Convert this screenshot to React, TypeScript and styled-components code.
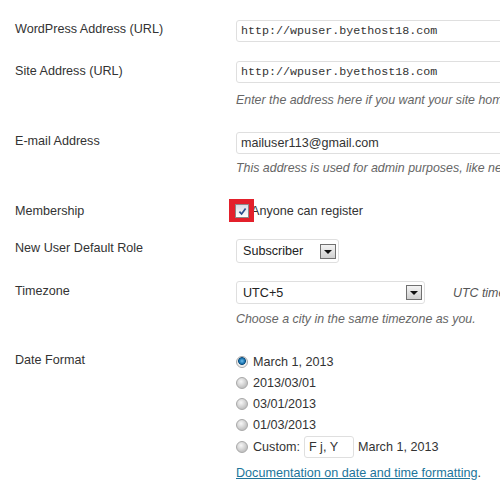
import styled, { createGlobalStyle } from "styled-components";

const GlobalStyle = createGlobalStyle`
  html, body {
    margin: 0;
    padding: 0;
    background: #fff;
    overflow: hidden;
  }
  body {
    font-family: "Liberation Sans", Arial, sans-serif;
    font-size: 12.6px;
    color: #333;
  }
`;

const dateFormats = ["March 1, 2013", "2013/03/01", "03/01/2013", "01/03/2013"];

const App = () => {
  return (
    <>
      <GlobalStyle />
      <Page>
        <Row $gap={0}>
          <Label $pad={1}>WordPress Address (URL)</Label>
          <Field>
            <TextInput $mono>http://wpuser.byethost18.com</TextInput>
          </Field>
        </Row>

        <Row $gap={19}>
          <Label $pad={2}>Site Address (URL)</Label>
          <Field>
            <TextInput $mono>http://wpuser.byethost18.com</TextInput>
            <Description $top={9}>
              Enter the address here if you want your site home page to be different from the directory you installed WordPress.
            </Description>
          </Field>
        </Row>

        <Row $gap={24}>
          <Label $pad={1}>E-mail Address</Label>
          <Field>
            <TextInput>mailuser113@gmail.com</TextInput>
            <Description $top={6}>
              This address is used for admin purposes, like new user notification.
            </Description>
          </Field>
        </Row>

        <Row $gap={27}>
          <Label $pad={0}>Membership</Label>
          <CheckLine>
            <CheckWrap>
              <Highlight />
              <CheckBox>
                <svg width="9" height="9" viewBox="0 0 9 9">
                  <path d="M1.4 4.6 L3.6 7 L7.6 1.4" fill="none" stroke="#2a4f8c" strokeWidth="1.7" />
                </svg>
              </CheckBox>
            </CheckWrap>
            <span>Anyone can register</span>
          </CheckLine>
        </Row>

        <Row $gap={20}>
          <Label $pad={1}>New User Default Role</Label>
          <Field>
            <Select $width={103} $height={24}>
              <span>Subscriber</span>
              <ArrowButton />
            </Select>
          </Field>
        </Row>

        <Row $gap={18}>
          <Label $pad={2}>Timezone</Label>
          <Field>
            <SelectLine>
              <Select $width={189} $height={23}>
                <span>UTC+5</span>
                <ArrowButton />
              </Select>
              <Aside>UTC time is</Aside>
            </SelectLine>
            <Description $top={7}>Choose a city in the same timezone as you.</Description>
          </Field>
        </Row>

        <Row $gap={24}>
          <Label $pad={1}>Date Format</Label>
          <Field>
            {dateFormats.map((f, i) => (
              <RadioRow key={f}>
                <Radio $checked={i === 0} />
                <span>{f}</span>
              </RadioRow>
            ))}
            <RadioRow $tall>
              <Radio $checked={false} />
              <span>Custom:</span>
              <SmallInput>F j, Y</SmallInput>
              <span>March 1, 2013</span>
            </RadioRow>
            <DocLine>
              <DocLink>Documentation on date and time formatting</DocLink>.
            </DocLine>
          </Field>
        </Row>
      </Page>
    </>
  );
};

export default App;

// Styled Components
const Page = styled.div`
  padding: 20px 0 0 15px;
  width: 485px;
  height: 480px;
  overflow: hidden;
`;

const Row = styled.div<{ $gap: number }>`
  display: flex;
  align-items: flex-start;
  margin-top: ${(p) => p.$gap}px;
`;

const Label = styled.div<{ $pad: number }>`
  width: 221px;
  flex-shrink: 0;
  line-height: 16px;
  padding-top: ${(p) => p.$pad}px;
  color: #333;
  white-space: nowrap;
`;

const Field = styled.div`
  display: flex;
  flex-direction: column;
  align-items: flex-start;
  min-width: 0;
`;

const CheckLine = styled.div`
  display: flex;
  align-items: center;
  height: 16px;
  line-height: 16px;
  white-space: nowrap;
`;

const SelectLine = styled.div`
  display: flex;
  align-items: center;
  white-space: nowrap;
`;

const TextInput = styled.div<{ $mono?: boolean }>`
  box-sizing: border-box;
  width: 325px;
  height: 22px;
  border: 1px solid #dfdfdf;
  border-radius: 3px;
  padding: 0 4px;
  display: flex;
  align-items: center;
  font-family: ${(p) =>
    p.$mono ? '"Liberation Mono", "Courier New", monospace' : '"Liberation Sans", Arial, sans-serif'};
  font-size: ${(p) => (p.$mono ? "11.7px" : "12.6px")};
  color: #333;
  white-space: nowrap;
`;

const Description = styled.div<{ $top: number }>`
  margin-top: ${(p) => p.$top}px;
  line-height: 16px;
  font-size: 12.4px;
  font-style: italic;
  color: #666;
  white-space: nowrap;
`;

const CheckWrap = styled.span`
  position: relative;
  display: inline-block;
  width: 14px;
  height: 14px;
  margin-left: -1px;
  margin-right: 2px;
`;

const Highlight = styled.span`
  position: absolute;
  left: -6px;
  top: -5px;
  width: 25px;
  height: 23px;
  background: #e3202b;
`;

const CheckBox = styled.span`
  position: relative;
  box-sizing: border-box;
  display: flex;
  align-items: center;
  justify-content: center;
  width: 14px;
  height: 14px;
  border: 1px solid #8a8a8a;
  background: linear-gradient(#d9dde6, #ffffff);
`;

const Select = styled.div<{ $width: number; $height: number }>`
  box-sizing: border-box;
  width: ${(p) => p.$width}px;
  height: ${(p) => p.$height}px;
  border: 1px solid #dfdfdf;
  border-radius: 3px;
  padding: 0 2px 0 6px;
  display: flex;
  align-items: center;
  justify-content: space-between;
  color: #222;
`;

const ArrowButton = styled.span`
  box-sizing: border-box;
  width: 16px;
  height: 15px;
  border: 1px solid #707070;
  background: linear-gradient(#f4f4f4, #cfcfcf);
  display: flex;
  align-items: center;
  justify-content: center;

  &::after {
    content: "";
    border-left: 4px solid transparent;
    border-right: 4px solid transparent;
    border-top: 4px solid #111;
    margin-top: 1px;
  }
`;

const Aside = styled.span`
  margin-left: 28px;
  font-size: 12.4px;
  font-style: italic;
  color: #555;
`;

const RadioRow = styled.div<{ $tall?: boolean }>`
  display: flex;
  align-items: center;
  gap: 4px;
  height: ${(p) => (p.$tall ? 24 : 21)}px;
  color: #333;
  white-space: nowrap;
`;

const Radio = styled.span<{ $checked: boolean }>`
  box-sizing: border-box;
  width: 12px;
  height: 12px;
  margin-right: 1px;
  border-radius: 50%;
  border: 1px solid #a8a8a8;
  background: ${(p) =>
    p.$checked
      ? "radial-gradient(circle at 50% 40%, #6fc0ee 0, #1f78b4 2.5px, #0f4f7e 3.6px, #e8e8e8 4.2px, #f4f4f4 6px)"
      : "radial-gradient(circle at 40% 35%, #f7f7f7 0, #dedede 3px, #c4c4c4 6px)"};
  flex-shrink: 0;
`;

const SmallInput = styled.span`
  box-sizing: border-box;
  width: 50px;
  height: 22px;
  border: 1px solid #dfdfdf;
  border-radius: 3px;
  padding: 0 4px;
  display: flex;
  align-items: center;
  color: #333;
`;

const DocLine = styled.div`
  margin-top: 6px;
  line-height: 16px;
  color: #333;
  white-space: nowrap;
`;

const DocLink = styled.a`
  color: #21759b;
  text-decoration: underline;
  cursor: pointer;
`;
